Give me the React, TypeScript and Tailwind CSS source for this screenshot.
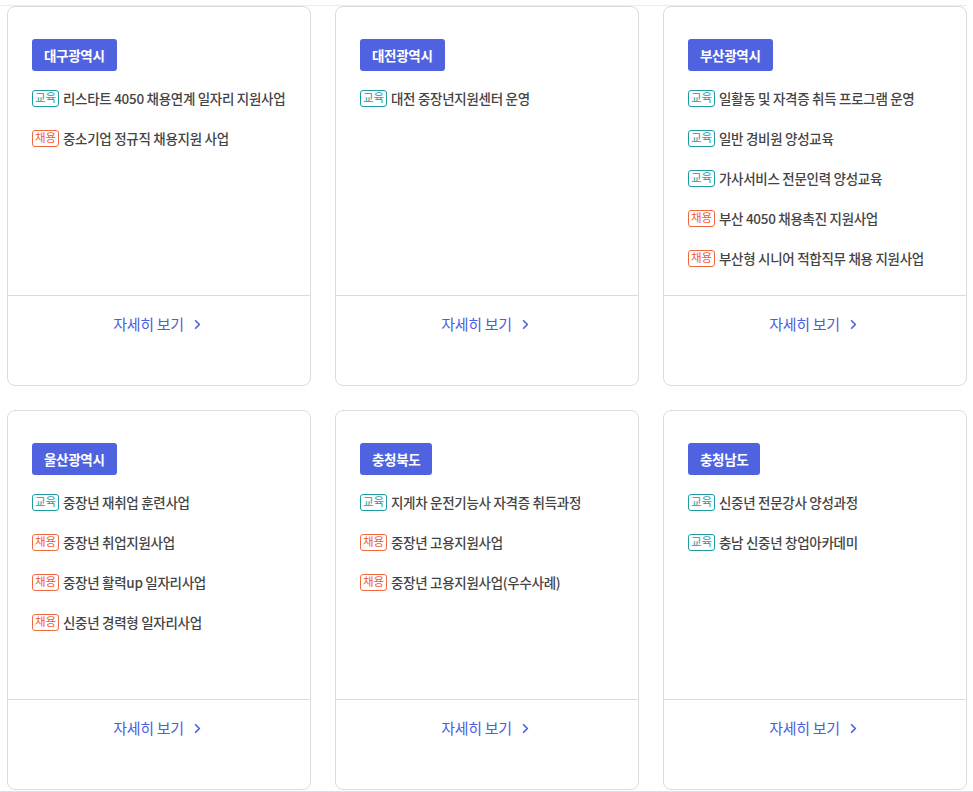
import { ChevronRight } from "lucide-react"

type Item = { kind: "edu" | "job"; text: string }
type Region = { name: string; items: Item[] }

const REGIONS: Region[] = [
  {
    name: "대구광역시",
    items: [
      { kind: "edu", text: "리스타트 4050 채용연계 일자리 지원사업" },
      { kind: "job", text: "중소기업 정규직 채용지원 사업" },
    ],
  },
  {
    name: "대전광역시",
    items: [{ kind: "edu", text: "대전 중장년지원센터 운영" }],
  },
  {
    name: "부산광역시",
    items: [
      { kind: "edu", text: "일활동 및 자격증 취득 프로그램 운영" },
      { kind: "edu", text: "일반 경비원 양성교육" },
      { kind: "edu", text: "가사서비스 전문인력 양성교육" },
      { kind: "job", text: "부산 4050 채용촉진 지원사업" },
      { kind: "job", text: "부산형 시니어 적합직무 채용 지원사업" },
    ],
  },
  {
    name: "울산광역시",
    items: [
      { kind: "edu", text: "중장년 재취업 훈련사업" },
      { kind: "job", text: "중장년 취업지원사업" },
      { kind: "job", text: "중장년 활력up 일자리사업" },
      { kind: "job", text: "신중년 경력형 일자리사업" },
    ],
  },
  {
    name: "충청북도",
    items: [
      { kind: "edu", text: "지게차 운전기능사 자격증 취득과정" },
      { kind: "job", text: "중장년 고용지원사업" },
      { kind: "job", text: "중장년 고용지원사업(우수사례)" },
    ],
  },
  {
    name: "충청남도",
    items: [
      { kind: "edu", text: "신중년 전문강사 양성과정" },
      { kind: "edu", text: "충남 신중년 창업아카데미" },
    ],
  },
]

function Tag({ kind }: { kind: Item["kind"] }) {
  if (kind === "edu") {
    return (
      <span className="inline-flex h-[17px] w-[27px] shrink-0 items-center justify-center rounded-[3px] border border-[#1e9aa5] text-[11.5px] leading-none text-[#1e9aa5]">
        교육
      </span>
    )
  }
  return (
    <span className="inline-flex h-[17px] w-[27px] shrink-0 items-center justify-center rounded-[3px] border border-[#f06a3e] text-[11.5px] leading-none text-[#ef5a3a]">
      채용
    </span>
  )
}

function RegionCard({ region }: { region: Region }) {
  return (
    <div className="flex h-[380px] flex-col rounded-[8px] border border-[#dcdcdc] bg-white">
      <div className="h-[288px] px-6 pt-8">
        <div className="inline-flex h-8 items-center rounded-[3px] bg-[#4f63e1] px-3 text-[13.5px] font-bold tracking-[-0.3px] text-white">
          {region.name}
        </div>
        <ul className="mt-[17px] flex flex-col gap-5">
          {region.items.map((item) => (
            <li key={item.text} className="flex h-5 items-center gap-1 whitespace-nowrap">
              <Tag kind={item.kind} />
              <span className="text-[13.5px] font-medium tracking-[-0.3px] text-[#444]">{item.text}</span>
            </li>
          ))}
        </ul>
      </div>
      <div className="flex flex-1 justify-center border-t border-[#dcdcdc] pt-[18px]">
        <a className="flex h-5 items-center gap-[6px] text-[15px] tracking-[-0.3px] text-[#4a60e0]">
          자세히 보기
          <ChevronRight size={15} strokeWidth={2.75} />
        </a>
      </div>
    </div>
  )
}

export default function App() {
  return (
    <div
      className="h-[792px] overflow-hidden bg-white pt-[5px]"
      style={{ fontFamily: '"Noto Sans CJK KR", "Noto Sans", sans-serif' }}
    >
      <div className="mr-[6px] h-px bg-[#ececec]" />
      <div className="grid grid-cols-[304px_304px_304px] gap-6 pl-[7px]">
        {REGIONS.map((r) => (
          <RegionCard key={r.name} region={r} />
        ))}
      </div>
      <div className="mt-px h-px bg-[#d9e1e8]" />
    </div>
  )
}
